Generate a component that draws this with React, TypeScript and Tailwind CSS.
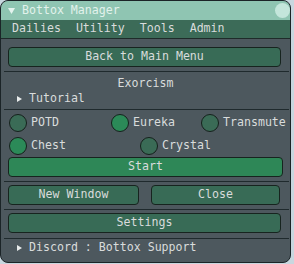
import React from "react";

function Btn({ label, className }: { label: string; className: string }) {
  return (
    <div className={`flex items-center justify-center h-[20px] rounded-[4px] border border-[#17241f] ${className}`}>
      {label}
    </div>
  );
}

function Radio({ label, on, width }: { label: string; on?: boolean; width: string }) {
  return (
    <div className={`flex items-center h-[18px] shrink-0 ${width}`}>
      <div className={`w-[18px] h-[18px] shrink-0 rounded-full border border-[#15211c] ${on ? "bg-[#2b8a58]" : "bg-[#3a6b56]"}`} />
      <span className="ml-[4px] whitespace-nowrap">{label}</span>
    </div>
  );
}

function Sep({ className = "" }: { className?: string }) {
  return <div className={`h-px ml-[3px] mr-[1px] bg-[#1f2a2d] ${className}`} />;
}

function Arrow() {
  return (
    <svg width="5" height="6" viewBox="0 0 5 6" className="shrink-0">
      <path d="M0 0 L5 3 L0 6 Z" fill="#e8ecec" />
    </svg>
  );
}

export default function App() {
  return (
    <div className="w-[294px] h-[264px] bg-[#c8d7df]">
      <div
        className="w-[291px] h-[263px] rounded-[8px] border border-[#1b2427] bg-[#4d585e] overflow-hidden flex flex-col text-[11.6px] text-[#d9dcdc] antialiased"
        style={{ fontFamily: '"DejaVu Sans Mono", monospace' }}
      >
        {/* title bar */}
        <div className="h-[19px] shrink-0 bg-[#8fc5b2] flex items-center">
          <svg width="7" height="6" viewBox="0 0 7 6" className="ml-[7px] shrink-0">
            <path d="M0 0 L7 0 L3.5 6 Z" fill="#e4f3ee" />
          </svg>
          <span className="ml-[7px] text-[#e2f2ec]">Bottox Manager</span>
          <div className="ml-auto w-[15px] h-[15px] rounded-full bg-[#c4e6db]" />
        </div>

        {/* menu bar */}
        <div className="h-[19px] shrink-0 bg-[#3c6b58] border-b border-[#1f2b2a] flex items-center pl-[11px] gap-[15px]">
          <span>Dailies</span>
          <span>Utility</span>
          <span>Tools</span>
          <span>Admin</span>
        </div>

        <Btn label="Back to Main Menu" className="mt-[8px] ml-[7px] w-[273px] bg-[#386b56]" />
        <Sep className="mt-[4px]" />

        <div className="mt-[3px] h-[16px] leading-[16px] text-center">Exorcism</div>
        <div className="h-[16px] flex items-center pl-[16px]">
          <Arrow />
          <span className="ml-[7px]">Tutorial</span>
        </div>
        <Sep className="mt-[2px]" />

        <div className="mt-[4px] flex pl-[8px]">
          <Radio label="POTD" width="w-[102px]" />
          <Radio label="Eureka" on width="w-[90px]" />
          <Radio label="Transmute" width="w-[80px]" />
        </div>
        <div className="mt-[5px] flex pl-[8px]">
          <Radio label="Chest" on width="w-[131px]" />
          <Radio label="Crystal" width="w-[80px]" />
        </div>

        <Btn label="Start" className="mt-[2px] ml-[7px] w-[275px] bg-[#2e8757]" />
        <Sep className="mt-[4px]" />

        <div className="mt-[3px] flex ml-[7px]">
          <Btn label="New Window" className="w-[131px] bg-[#386b56]" />
          <Btn label="Close" className="ml-[12px] w-[129px] bg-[#386b56]" />
        </div>
        <Sep className="mt-[4px]" />

        <Btn label="Settings" className="mt-[3px] ml-[7px] w-[273px] bg-[#386b56]" />
        <Sep className="mt-[5px]" />

        <div className="mt-[1px] h-[16px] flex items-center pl-[16px]">
          <Arrow />
          <span className="ml-[7px]">Discord : Bottox Support</span>
        </div>
      </div>
    </div>
  );
}
